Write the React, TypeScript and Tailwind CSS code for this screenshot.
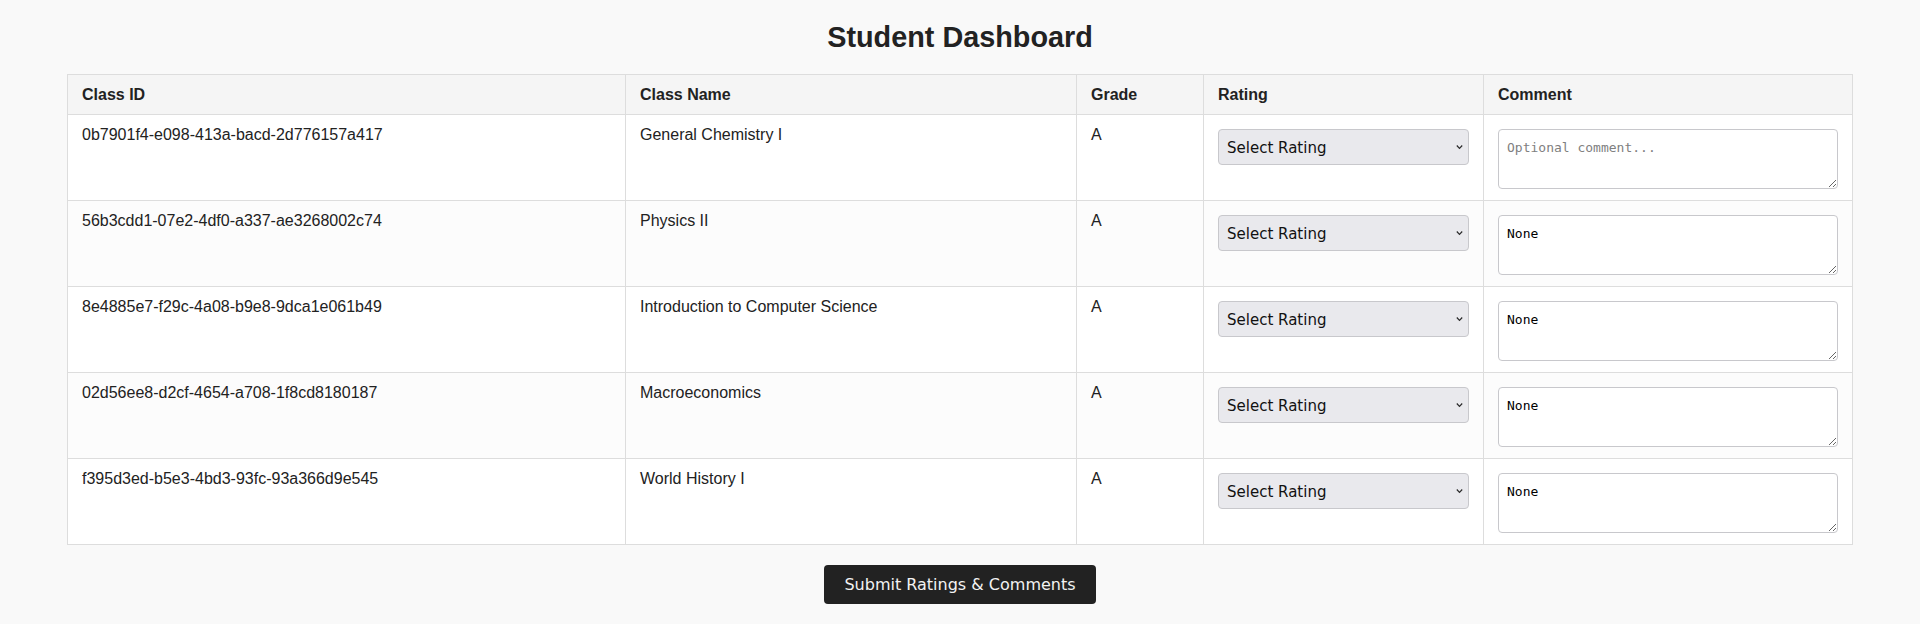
import React from "react";

const rows = [
  { id: "0b7901f4-e098-413a-bacd-2d776157a417", name: "General Chemistry I", grade: "A", comment: "" },
  { id: "56b3cdd1-07e2-4df0-a337-ae3268002c74", name: "Physics II", grade: "A", comment: "None" },
  { id: "8e4885e7-f29c-4a08-b9e8-9dca1e061b49", name: "Introduction to Computer Science", grade: "A", comment: "None" },
  { id: "02d56ee8-d2cf-4654-a708-1f8cd8180187", name: "Macroeconomics", grade: "A", comment: "None" },
  { id: "f395d3ed-b5e3-4bd3-93fc-93a366d9e545", name: "World History I", grade: "A", comment: "None" },
];

function RatingSelect() {
  return (
    <div className="relative mt-[3px] w-full">
      <select
        defaultValue=""
        className="block h-[36px] w-full appearance-none rounded-[4px] border border-[#c8c8cc] bg-[#e9e9ed] pl-[8px] pr-[16px] pt-[2px] text-[15px] text-[#111111] outline-none"
        style={{ fontFamily: '"DejaVu Sans", sans-serif' }}
      >
        <option value="">Select Rating</option>
        <option value="1">1</option>
        <option value="2">2</option>
        <option value="3">3</option>
        <option value="4">4</option>
        <option value="5">5</option>
      </select>
      <svg
        className="pointer-events-none absolute right-[6px] top-1/2 -translate-y-1/2"
        width="7"
        height="5"
        viewBox="0 0 7 5"
        fill="none"
      >
        <polyline points="0.8,1 3.5,3.8 6.2,1" stroke="#2a2a2a" strokeWidth="1.2" />
      </svg>
    </div>
  );
}

export default function App() {
  return (
    <div
      className="min-h-[624px] bg-[#f9f9f9] px-5 pt-[21px] pb-5 text-[#222222]"
      style={{ fontFamily: '"Liberation Sans", Arial, sans-serif' }}
    >
      <h1 className="m-0 text-center text-[28.8px] font-bold leading-[33px] text-[#222222]">
        Student Dashboard
      </h1>
      <table className="mx-auto mt-5 w-[95%] table-fixed border-collapse bg-white text-[16px]">
        <colgroup>
          <col className="w-[558px]" />
          <col className="w-[451px]" />
          <col className="w-[127px]" />
          <col className="w-[280px]" />
          <col />
        </colgroup>
        <thead>
          <tr className="bg-[#f5f5f5]">
            {["Class ID", "Class Name", "Grade", "Rating", "Comment"].map((h) => (
              <th
                key={h}
                className="border border-[#dddddd] px-[14px] py-[10px] text-left font-bold leading-[19px]"
              >
                {h}
              </th>
            ))}
          </tr>
        </thead>
        <tbody>
          {rows.map((r, i) => (
            <tr key={r.id} className={i % 2 === 1 ? "bg-[#fcfcfc]" : "bg-white"}>
              <td className="border border-[#dddddd] px-[14px] py-[11px] align-top leading-[18px]">{r.id}</td>
              <td className="border border-[#dddddd] px-[14px] py-[11px] align-top leading-[18px]">{r.name}</td>
              <td className="border border-[#dddddd] px-[14px] py-[11px] align-top leading-[18px]">{r.grade}</td>
              <td className="border border-[#dddddd] px-[14px] py-[11px] align-top leading-[18px]">
                <RatingSelect />
              </td>
              <td className="border border-[#dddddd] px-[14px] py-[11px] align-top leading-[18px]">
                <textarea
                  defaultValue={r.comment}
                  placeholder="Optional comment..."
                  className="mt-[3px] block h-[60px] w-full rounded-[4px] border border-[#c8c8cc] bg-white px-[8px] pt-[9px] pb-[6px] text-[13px] leading-[18px] text-[#000000] outline-none placeholder:text-[#808080]"
                  style={{ fontFamily: '"DejaVu Sans Mono", monospace' }}
                />
              </td>
            </tr>
          ))}
        </tbody>
      </table>
      <div className="mt-5 flex justify-center">
        <button
          className="h-[39px] rounded-[4px] bg-[#222222] px-5 text-[16px] leading-[19px] text-[#f2f2f2]"
          style={{ fontFamily: '"DejaVu Sans", sans-serif' }}
        >
          Submit Ratings &amp; Comments
        </button>
      </div>
    </div>
  );
}
